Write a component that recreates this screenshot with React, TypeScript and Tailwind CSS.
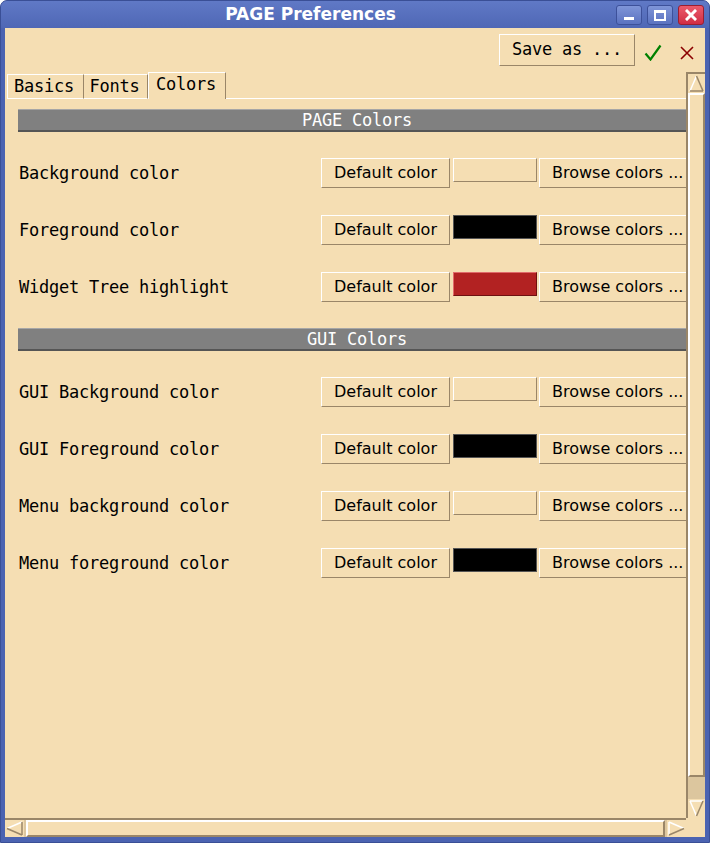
import React from 'react';

const mono = "font-['DejaVu_Sans_Mono',monospace] text-[17px] tracking-[-0.23px]";
const sans = "font-['DejaVu_Sans',sans-serif]";
const raised = 'border border-t-white border-l-white border-b-[#9a8668] border-r-[#9a8668]';

const pageColors = [
  { label: 'Background color', swatch: 'none' },
  { label: 'Foreground color', swatch: 'black' },
  { label: 'Widget Tree highlight', swatch: 'red' },
];

const guiColors = [
  { label: 'GUI Background color', swatch: 'none' },
  { label: 'GUI Foreground color', swatch: 'black' },
  { label: 'Menu background color', swatch: 'none' },
  { label: 'Menu foreground color', swatch: 'black' },
];

const Swatch = ({ kind }: { kind: string }) => {
  if (kind === 'black') {
    return <div className="w-[84px] h-[24px] shrink-0 bg-black border border-[#555]" />;
  }
  if (kind === 'red') {
    return (
      <div className="w-[84px] h-[24px] shrink-0 bg-[#b22222] border border-t-[#e06a6a] border-l-[#e06a6a] border-b-[#6e1010] border-r-[#6e1010]" />
    );
  }
  return (
    <div className="w-[84px] h-[24px] shrink-0 bg-[#f5deb3] border border-t-white border-l-white border-b-[#9a8668] border-r-[#9a8668]" />
  );
};

const ColorRow = ({ label, swatch }: { label: string; swatch: string }) => (
  <div className="flex items-start shrink-0">
    <div className={`w-[303px] shrink-0 h-[30px] flex items-center pl-[1px] pt-[1px] text-black ${mono}`}>{label}</div>
    <div className={`w-[129px] h-[30px] shrink-0 flex items-center justify-center text-[16px] text-black ${sans} ${raised}`}>
      Default color
    </div>
    <div className="w-[3px] shrink-0" />
    <Swatch kind={swatch} />
    <div className="w-[2px] shrink-0" />
    <div className={`w-[162px] h-[30px] shrink-0 flex items-center pl-[12px] text-[16px] text-black whitespace-nowrap ${sans} ${raised}`}>
      Browse colors ...
    </div>
  </div>
);

const Header = ({ title }: { title: string }) => (
  <div className={`w-[678px] h-[23px] shrink-0 bg-[#808080] border-t border-t-[#a6a6a6] border-b-2 border-b-[#555] flex items-center justify-center pt-[1px] text-white ${mono}`}>
    {title}
  </div>
);

const Arrow = ({ dir }: { dir: 'up' | 'down' | 'left' | 'right' }) => {
  const light = '#ffffff';
  const dark = '#9a8668';
  if (dir === 'up') {
    return (
      <svg width="15" height="17" viewBox="0 0 15 17">
        <line x1="7.5" y1="1" x2="1" y2="16" stroke={light} strokeWidth="1.5" />
        <line x1="7.5" y1="1" x2="14" y2="16" stroke={dark} strokeWidth="1.5" />
        <line x1="1" y1="16" x2="14" y2="16" stroke={dark} strokeWidth="1.5" />
      </svg>
    );
  }
  if (dir === 'down') {
    return (
      <svg width="15" height="17" viewBox="0 0 15 17">
        <line x1="1" y1="1" x2="14" y2="1" stroke={light} strokeWidth="1.5" />
        <line x1="1" y1="1" x2="7.5" y2="16" stroke={light} strokeWidth="1.5" />
        <line x1="14" y1="1" x2="7.5" y2="16" stroke={dark} strokeWidth="1.5" />
      </svg>
    );
  }
  if (dir === 'left') {
    return (
      <svg width="17" height="15" viewBox="0 0 17 15">
        <line x1="1" y1="7.5" x2="16" y2="1" stroke={light} strokeWidth="1.5" />
        <line x1="1" y1="7.5" x2="16" y2="14" stroke={dark} strokeWidth="1.5" />
        <line x1="16" y1="1" x2="16" y2="14" stroke={dark} strokeWidth="1.5" />
      </svg>
    );
  }
  return (
    <svg width="17" height="15" viewBox="0 0 17 15">
      <line x1="1" y1="1" x2="1" y2="14" stroke={light} strokeWidth="1.5" />
      <line x1="1" y1="1" x2="16" y2="7.5" stroke={light} strokeWidth="1.5" />
      <line x1="1" y1="14" x2="16" y2="7.5" stroke={dark} strokeWidth="1.5" />
    </svg>
  );
};

const App = () => {
  return (
    <div className="w-[710px] h-[843px] bg-[#4b63b1] rounded-t-[7px] flex flex-col px-[4px] pb-[5px] border border-[#3a4f96]">
      {/* title bar */}
      <div className="h-[27px] shrink-0 flex items-center -mx-[4px] bg-gradient-to-b from-[#6079c6] to-[#4f67b5] rounded-t-[6px]">
        <div className={`flex-1 text-center text-white text-[17px] font-bold ${sans} pl-[4px]`}>PAGE Preferences</div>
        <div className="flex gap-[5px] pr-[5px] pt-[1px]">
          <div className="w-[26px] h-[20px] rounded-[3px] bg-gradient-to-b from-[#7f95d8] to-[#5b72c0] border border-[#3d519a] flex items-end justify-center pb-[4px]">
            <div className="w-[10px] h-[3px] bg-white" />
          </div>
          <div className="w-[26px] h-[20px] rounded-[3px] bg-gradient-to-b from-[#7f95d8] to-[#5b72c0] border border-[#3d519a] flex items-center justify-center">
            <div className="w-[12px] h-[11px] border-2 border-t-[3px] border-white" />
          </div>
          <div className="w-[26px] h-[20px] rounded-[3px] bg-gradient-to-b from-[#ec5a6c] to-[#d02c44] border border-[#9b1e30] flex items-center justify-center">
            <svg width="12" height="12" viewBox="0 0 12 12">
              <path d="M2 2 L10 10 M10 2 L2 10" stroke="white" strokeWidth="3" strokeLinecap="square" />
            </svg>
          </div>
        </div>
      </div>

      {/* client area */}
      <div className="flex-1 bg-[#f5deb3] flex flex-col overflow-hidden">
        {/* toolbar */}
        <div className="h-[44px] shrink-0 flex items-start justify-end">
          <div className={`mt-[6px] w-[136px] h-[32px] flex items-center justify-center text-black ${mono} ${raised}`}>
            Save as ...
          </div>
          <div className="w-[36px] h-[44px] flex items-center justify-center pt-[5px]">
            <svg width="18" height="17" viewBox="0 0 18 17">
              <path d="M1.5 9.5 L6.5 15.5 L16.5 1.5" stroke="#008000" strokeWidth="2.2" fill="none" />
            </svg>
          </div>
          <div className="w-[34px] h-[44px] flex items-center justify-start pl-[9px] pt-[5px]">
            <svg width="14" height="14" viewBox="0 0 14 14">
              <path d="M1 1 L13 13 M13 1 L1 13" stroke="#8b0000" strokeWidth="1.6" />
            </svg>
          </div>
        </div>

        {/* middle */}
        <div className="flex-1 flex min-h-0">
          <div className="flex-1 flex flex-col min-w-0">
            {/* tabs */}
            <div className={`h-[27px] shrink-0 flex items-end pl-[2px] text-black ${mono}`}>
              <div className="h-[25px] w-[77px] flex items-center justify-center pr-[3px] border-t border-l border-white border-r border-r-[#9a8668] border-b border-b-white">Basics</div>
              <div className="h-[25px] w-[64px] flex items-center justify-center pr-[2px] border-t border-white border-r border-r-[#9a8668] border-b border-b-white">Fonts</div>
              <div className="h-[27px] w-[78px] flex items-center justify-center pb-[2px] pr-[2px] border-t border-l border-white border-r border-r-[#9a8668]">Colors</div>
              <div className="flex-1 border-b border-white" />
            </div>

            {/* panel */}
            <div className="flex-1 overflow-hidden pl-[13px] pt-[10px] flex flex-col">
              <Header title="PAGE Colors" />
              <div className="h-[26px] shrink-0" />
              <div className="flex flex-col gap-[27px]">
                {pageColors.map((r) => (
                  <ColorRow key={r.label} label={r.label} swatch={r.swatch} />
                ))}
              </div>
              <div className="h-[26px] shrink-0" />
              <Header title="GUI Colors" />
              <div className="h-[26px] shrink-0" />
              <div className="flex flex-col gap-[27px]">
                {guiColors.map((r) => (
                  <ColorRow key={r.label} label={r.label} swatch={r.swatch} />
                ))}
              </div>
            </div>
          </div>

          {/* vertical scrollbar */}
          <div className="w-[19px] shrink-0 flex flex-col bg-[#dcc69e] border-l-2 border-t-2 border-[#9a8668]">
            <div className="h-[19px] shrink-0 bg-[#f5deb3] flex items-center justify-center">
              <Arrow dir="up" />
            </div>
            <div className="h-[684px] shrink-0 bg-[#f5deb3] border-2 border-t-white border-l-white border-b-[#9a8668] border-r-[#9a8668]" />
            <div className="flex-1" />
            <div className="h-[19px] shrink-0 bg-[#f5deb3] flex items-center justify-center">
              <Arrow dir="down" />
            </div>
          </div>
        </div>

        {/* horizontal scrollbar */}
        <div className="h-[19px] shrink-0 flex">
          <div className="flex-1 flex bg-[#dcc69e] border-t-2 border-[#9a8668]">
            <div className="w-[19px] shrink-0 bg-[#f5deb3] flex items-center justify-center">
              <Arrow dir="left" />
            </div>
            <div className="flex-1 bg-[#f5deb3] border-2 border-t-white border-l-white border-b-[#9a8668] border-r-[#9a8668] mx-[2px]" />
            <div className="w-[19px] shrink-0 bg-[#f5deb3] flex items-center justify-center">
              <Arrow dir="right" />
            </div>
          </div>
          <div className="w-[19px] shrink-0 bg-[#f5deb3]" />
        </div>
      </div>
    </div>
  );
};

export default App;
